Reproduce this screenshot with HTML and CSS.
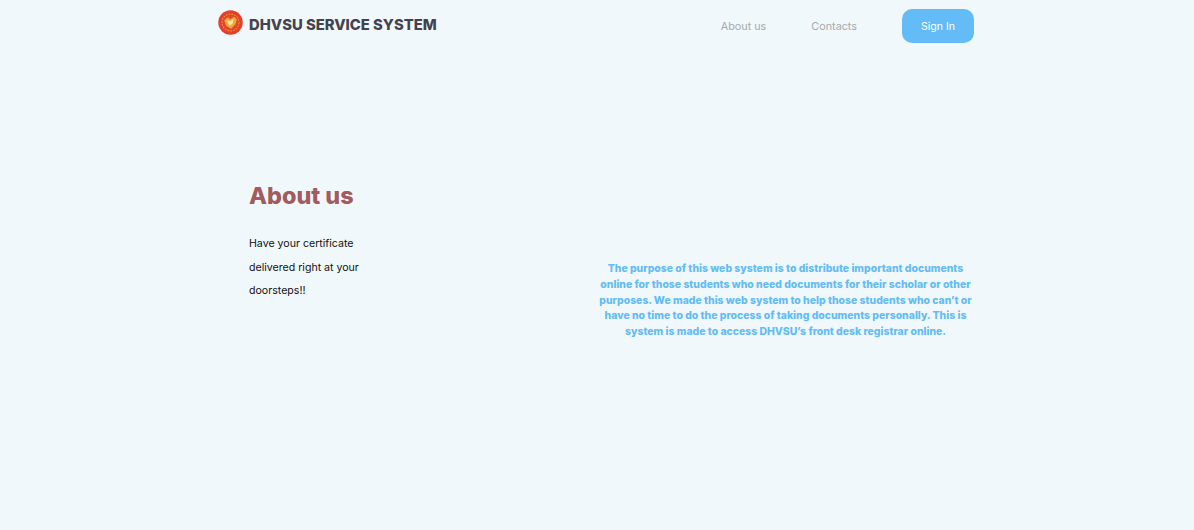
FILE: index.html
```html
<!DOCTYPE html>
<html lang="en">
<head>
<meta charset="utf-8">
<title>DHVSU Service System</title>
<link rel="stylesheet" href="styles.css">
</head>
<body>
<header class="header">
  <a class="brand" href="#">
    <svg class="logo" viewBox="0 0 26 26" aria-hidden="true">
      <circle cx="13" cy="13" r="12.7" fill="#e2402c"/>
      <circle cx="13" cy="13" r="8.8" fill="none" stroke="#ee8a34" stroke-width="1.2" stroke-dasharray="2 1"/>
      <circle cx="13" cy="13" r="7.6" fill="#e0492b"/>
      <path d="M6.5 11 L10 7.5 L13 9.5 L17 7 L19.5 10 L18 15 L13.5 19.5 L8.5 16.5 Z" fill="#efa83a"/>
      <path d="M9.5 11 L13 11.5 L16 9 L15.5 13.5 L12.5 16.5 L10.5 14 Z" fill="#f8e3a0"/>
    </svg>
    <span class="brand-name">DHVSU SERVICE SYSTEM</span>
  </a>
  <nav class="nav">
    <a class="nav-link" href="#">About us</a>
    <a class="nav-link" href="#">Contacts</a>
    <a class="signin" href="#">Sign In</a>
  </nav>
</header>
<main class="about">
  <section class="intro">
    <h1 class="title">About us</h1>
    <p class="tagline">Have your certificate delivered right at your doorsteps!!</p>
  </section>
  <p class="purpose">The purpose of this web system is to distribute important documents online for those students who need documents for their scholar or other purposes. We made this web system to help those students who can’t or have no time to do the process of taking documents personally. This is system is made to access DHVSU’s front desk registrar online.</p>
</main>
</body>
</html>
```
FILE: styles.css
```css
* { box-sizing: border-box; }
html, body { height: 100%; }
body {
  margin: 0;
  background: #f0f8fc;
  font-family: Inter, "Liberation Sans", sans-serif;
}
a { text-decoration: none; }
.header {
  width: 756px;
  margin-left: 218px;
  padding-top: 9px;
  display: flex;
  justify-content: space-between;
  align-items: flex-start;
}
.brand { display: flex; align-items: center; gap: 6px; height: 28px; }
.logo { width: 25px; height: 25px; margin-top: -2px; }
.brand-name {
  margin-top: 4px;
  font-size: 14.8px;
  font-weight: 800;
  color: #45424f;
  white-space: nowrap;
}
.nav { display: flex; align-items: center; }
.nav-link {
  font-size: 10.8px;
  color: #a9a9a9;
  margin-right: 45px;
  white-space: nowrap;
}
.signin {
  width: 72px;
  height: 34px;
  display: flex;
  align-items: center;
  justify-content: center;
  background: #63bcf7;
  border-radius: 10px;
  color: #fff;
  font-size: 10.5px;
}
.about {
  display: flex;
  padding: 138px 0 0 249px;
}
.intro { width: 348px; }
.title {
  margin: 0;
  font-size: 23.4px;
  font-weight: 800;
  line-height: 30px;
  color: #a25b5e;
}
.tagline {
  margin: 21px 0 0;
  width: 125px;
  font-size: 10.6px;
  line-height: 23.5px;
  color: #111;
}
.purpose {
  margin: 80px 0 0;
  width: 377px;
  text-align: center;
  font-size: 10.45px;
  font-weight: 800;
  line-height: 15.8px;
  color: #63bcf7;
}
```
